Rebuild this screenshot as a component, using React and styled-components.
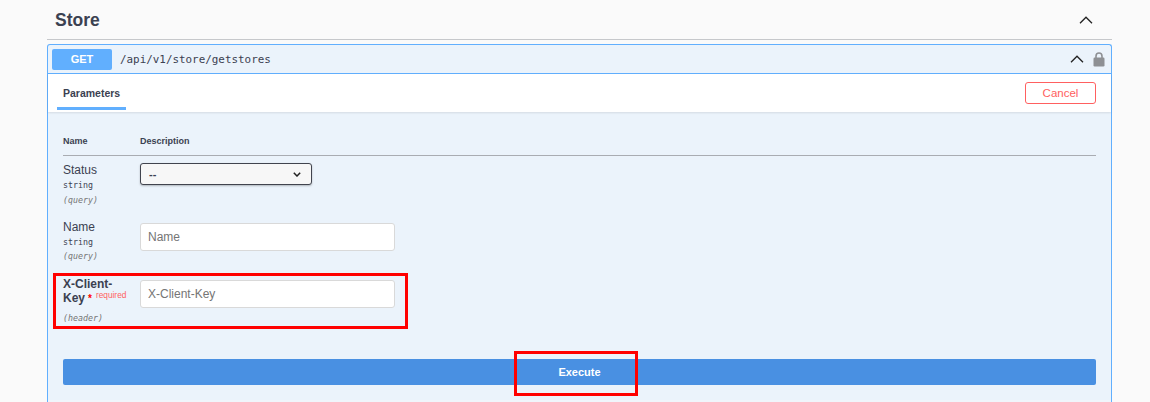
import React from 'react';
import styled, {createGlobalStyle} from 'styled-components';

const Global = createGlobalStyle`
    html, body {
        margin: 0;
        padding: 0;
        height: 402px;
        overflow: hidden;
        background-color: #fafafa;
        font-family: "Liberation Sans", sans-serif;
    }
`;

const Page = styled.div`
    padding: 0 38px 0 47px;
    height: 402px;
    overflow: hidden;
    color: #3b4151;
`;

const SectionHeader = styled.div`
    display: flex;
    align-items: center;
    justify-content: space-between;
    height: 38px;
    padding: 1px 19px 0 8px;
    border-bottom: 1px solid #c6c8cb;
    margin-bottom: 4px;
`;

const SectionTitle = styled.h4`
    margin: 0;
    font-size: 17.5px;
    font-weight: 700;
`;

const Block = styled.div`
    border: 1px solid #61affe;
    border-bottom: none;
    border-radius: 3px 3px 0 0;
    background-color: #ebf3fb;
`;

const Summary = styled.div`
    display: flex;
    align-items: center;
    height: 28px;
    padding: 0 6px 0 4px;
    border-bottom: 1px solid #61affe;
`;

const Method = styled.span`
    width: 60px;
    height: 21px;
    line-height: 21px;
    text-align: center;
    background-color: #61affe;
    border-radius: 2px;
    color: #fff;
    font-size: 11px;
    font-weight: 700;
`;

const Path = styled.span`
    flex-grow: 1;
    padding-left: 8px;
    font-size: 10.9px;
    font-family: "DejaVu Sans Mono", monospace;
`;

const SummaryIcons = styled.div`
    display: flex;
    align-items: center;
    gap: 9px;
`;

const TabBar = styled.div`
    display: flex;
    align-items: center;
    justify-content: space-between;
    height: 38px;
    padding: 0 15px 0 9px;
    background-color: #fff;
    box-shadow: 0 1px 2px rgba(0, 0, 0, .1);
`;

const Tab = styled.div`
    align-self: flex-start;
    display: flex;
    align-items: center;
    padding: 4px 6px 0;
    font-size: 10.5px;
    font-weight: 700;
    border-bottom: 3px solid #61affe;
    box-sizing: border-box;
    height: 36px;
`;

const CancelButton = styled.button`
    width: 71px;
    height: 22px;
    padding: 0;
    background: transparent;
    border: 1px solid #ff6060;
    border-radius: 3px;
    color: #ff6060;
    font-size: 11.5px;
    font-weight: 400;
    font-family: "Liberation Sans", sans-serif;
`;

const Params = styled.div`
    padding: 22px 15px 15px;
`;

const Grid = styled.div`
    display: grid;
    grid-template-columns: 77px 1fr;
`;

const HeadCell = styled.div`
    height: 19px;
    padding-top: 2px;
    font-size: 9px;
    font-weight: 700;
    border-bottom: 1px solid #a9acb2;
    margin-bottom: 7px;
`;

const NameCell = styled.div`
    height: ${({tall}) => tall}px;
    padding-right: 4px;
`;

const ValueCell = styled.div`
    padding-top: ${({offset}) => offset || 0}px;
`;

const ParamName = styled.div`
    font-size: 12px;
    line-height: ${({required}) => required ? 14 : 13}px;
    font-weight: ${({required}) => required ? 700 : 400};
    margin-top: ${({drop}) => drop || 0}px;
`;

const Star = styled.span`
    color: #f00;
    font-size: 10px;
    line-height: 0;
    padding: 0 4px 0 3px;
`;

const Required = styled.span`
    color: #ff6060;
    font-size: 8.3px;
    font-weight: 400;
    line-height: 0;
    vertical-align: 4px;
`;

const ParamType = styled.div`
    margin-top: 3px;
    font-size: 8.3px;
    line-height: 11px;
    font-family: "DejaVu Sans Mono", monospace;
`;

const ParamIn = styled(ParamType)`
    margin-top: ${({gap}) => gap}px;
    font-style: italic;
    color: #757575;
`;

const Select = styled.div`
    display: flex;
    align-items: center;
    justify-content: space-between;
    width: 172px;
    height: 22px;
    box-sizing: border-box;
    padding: 0 10px 0 8px;
    background-color: #f7f7f7;
    border: 1px solid #41444e;
    border-radius: 3px;
    box-shadow: 0 1px 2px rgba(0, 0, 0, .25);
    font-size: 11px;
    font-weight: 700;
`;

const Input = styled.input`
    display: block;
    width: 255px;
    height: 28px;
    box-sizing: border-box;
    padding: 0 7px;
    background-color: #fff;
    border: 1px solid #d9d9d9;
    border-radius: 3px;
    font-size: 12px;
    font-family: "Liberation Sans", sans-serif;
    &::placeholder {
        color: #757575;
    }
`;

const ExecuteButton = styled.button`
    display: block;
    width: 100%;
    height: 26px;
    margin-top: 19px;
    padding: 0;
    border: none;
    border-radius: 2px;
    background-color: #4990e2;
    color: #fff;
    font-size: 11px;
    font-weight: 700;
    font-family: "Liberation Sans", sans-serif;
`;

const BottomStrip = styled.div`
    height: 2px;
    background-color: #f0f5fb;
`;

const Highlight = styled.div`
    position: absolute;
    left: ${({x}) => x}px;
    top: ${({y}) => y}px;
    width: ${({w}) => w}px;
    height: ${({h}) => h}px;
    border: 3px solid #f00;
    box-sizing: border-box;
`;

const Chevron = () => (
    <svg width="14" height="8" viewBox="0 0 14 8" fill="none" stroke="#222" strokeWidth="1.3">
        <path d="M1 7.2 L7 1.2 L13 7.2"/>
    </svg>
);

const Lock = () => (
    <svg width="12" height="15" viewBox="0 0 12 15">
        <path d="M3 7V4.2C3 2.3 4.2 1 6 1s3 1.3 3 3.2V7" fill="none" stroke="#8e9094" strokeWidth="1.6"/>
        <rect x="0.5" y="5.5" width="11" height="9" rx="1.2" fill="#8e9094"/>
    </svg>
);

const SelectArrow = () => (
    <svg width="8" height="5" viewBox="0 0 8 5" fill="none" stroke="#222" strokeWidth="1.5">
        <path d="M.8 .8 L4 4 L7.2 .8"/>
    </svg>
);

const App = () => (
    <Page>
        <Global/>
        <SectionHeader>
            <SectionTitle>Store</SectionTitle>
            <Chevron/>
        </SectionHeader>
        <Block>
            <Summary>
                <Method>GET</Method>
                <Path>/api/v1/store/getstores</Path>
                <SummaryIcons>
                    <Chevron/>
                    <Lock/>
                </SummaryIcons>
            </Summary>
            <TabBar>
                <Tab>Parameters</Tab>
                <CancelButton>Cancel</CancelButton>
            </TabBar>
            <Params>
                <Grid>
                    <HeadCell>Name</HeadCell>
                    <HeadCell>Description</HeadCell>

                    <NameCell tall={58}>
                        <ParamName drop={1}>Status</ParamName>
                        <ParamType>string</ParamType>
                        <ParamIn gap={4}>(query)</ParamIn>
                    </NameCell>
                    <ValueCell><Select>--<SelectArrow/></Select></ValueCell>

                    <NameCell tall={56}>
                        <ParamName>Name</ParamName>
                        <ParamType>string</ParamType>
                        <ParamIn gap={3}>(query)</ParamIn>
                    </NameCell>
                    <ValueCell offset={2}><Input placeholder="Name"/></ValueCell>

                    <NameCell tall={63}>
                        <ParamName required>X-Client-<br/>Key<Star>*</Star><Required>required</Required></ParamName>
                        <ParamIn gap={8}>(header)</ParamIn>
                    </NameCell>
                    <ValueCell offset={3}><Input placeholder="X-Client-Key"/></ValueCell>
                </Grid>
                <ExecuteButton>Execute</ExecuteButton>
            </Params>
            <BottomStrip/>
        </Block>
        <Highlight x={53} y={273} w={355} h={56}/>
        <Highlight x={514} y={351} w={124} h={45}/>
    </Page>
);

export default App;
